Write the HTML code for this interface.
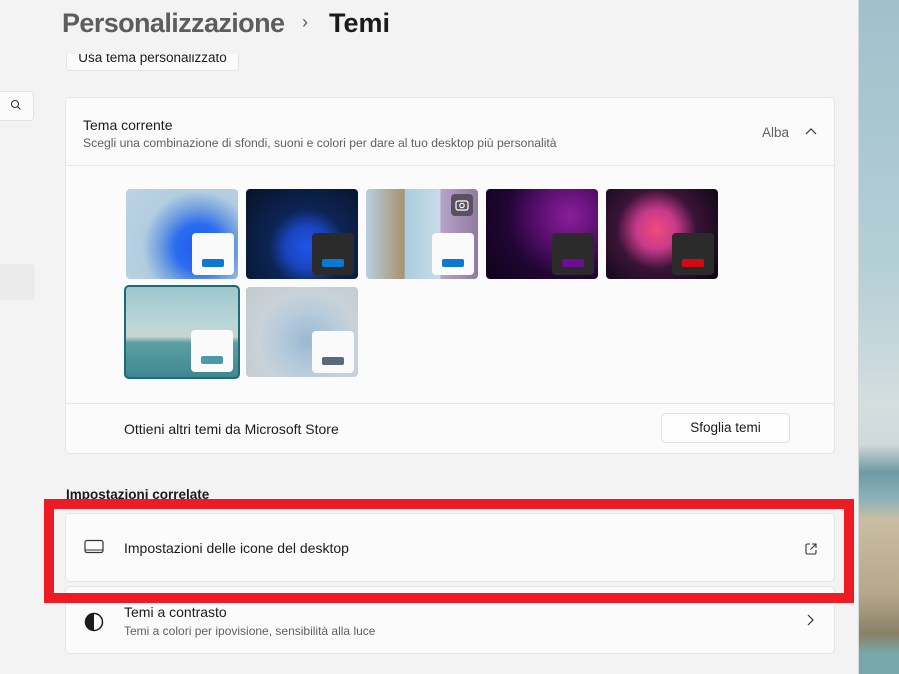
<!DOCTYPE html><html><head><meta charset="utf-8"><style>
*{box-sizing:border-box;margin:0;padding:0}
body{width:899px;height:674px;overflow:hidden;background:#f3f3f3;font-family:"Segoe UI","Liberation Sans",sans-serif;color:#1b1b1b;position:relative}
.abs{position:absolute}
.card{position:absolute;background:#fbfbfb;border:1px solid #e5e5e5;border-radius:5px}
.th{position:absolute;width:112px;height:90px;border-radius:4px;overflow:hidden}
.ov{position:absolute;left:66px;top:44px;width:42px;height:42px;border-radius:4px;background:#fafafa}
.ov.d{background:#2b2b2b}
.bar{position:absolute;left:10px;top:26px;width:22px;height:8px;border-radius:2px}
</style></head><body>
<div class="abs" style="left:859px;top:0;width:40px;height:674px;background:linear-gradient(#9fc0cc 0%,#b5cfd6 40%,#d4dedf 60%,#cfd8da 66%,#6f9aa3 70%,#8bb2b9 74%,#c9bda3 77%,#b7a88a 88%,#8a8068 94%,#78a8aa 97%)"></div>
<div class="abs" style="left:858px;top:0;width:1px;height:674px;background:#d8d8d8"></div>

<div class="abs" style="left:0;top:91px;width:34px;height:30px;background:#fbfbfb;border:1px solid #e3e3e3;border-left:none;border-radius:0 4px 4px 0"></div>
<svg class="abs" style="left:10px;top:99px" width="12" height="12" viewBox="0 0 12 12"><circle cx="5" cy="5" r="3.5" fill="none" stroke="#333" stroke-width="1.1"/><path d="M7.5 7.5L10.5 10.5" stroke="#333" stroke-width="1.1"/></svg>
<div class="abs" style="left:0;top:264px;width:35px;height:36px;background:#eaeaea;border-radius:0 4px 4px 0"></div>

<div class="abs" style="left:66px;top:40px;width:173px;height:31px;background:#fbfbfb;border:1px solid #e3e3e3;border-radius:4px;font-size:13.5px;text-align:center;line-height:34px">Usa tema personalizzato</div>
<div class="abs" style="left:0;top:0;width:858px;height:54px;background:#f3f3f3"></div>
<div class="abs" style="left:62px;top:8px;font-size:27px;font-weight:600;color:#5d5d5d;white-space:nowrap;letter-spacing:-0.6px">Personalizzazione</div>
<div class="abs" style="left:302px;top:12px;font-size:18px;color:#5d5d5d">›</div>
<div class="abs" style="left:329px;top:8px;font-size:27px;font-weight:600;color:#1b1b1b">Temi</div>

<div class="card" style="left:65px;top:97px;width:770px;height:357px">
<div class="abs" style="left:17px;top:19px;font-size:14px">Tema corrente</div>
<div class="abs" style="left:17px;top:38px;font-size:12.2px;color:#5f5f5f;white-space:nowrap">Scegli una combinazione di sfondi, suoni e colori per dare al tuo desktop più personalità</div>
<div class="abs" style="left:696px;top:27px;font-size:13.5px;color:#5f5f5f">Alba</div>
<svg class="abs" style="left:738px;top:29px" width="14" height="10" viewBox="0 0 14 10"><path d="M2 7L7 2L12 7" fill="none" stroke="#333" stroke-width="1.2"/></svg>
<div class="abs" style="left:0;top:67px;width:768px;height:1px;background:#e8e8e8"></div>
<div class="abs" style="left:0;top:305px;width:768px;height:1px;background:#e5e5e5"></div>
<div class="abs" style="left:58px;top:323px;font-size:14px">Ottieni altri temi da Microsoft Store</div>
<div class="abs" style="left:595px;top:315px;width:129px;height:30px;background:#fefefe;border:1px solid #e0e0e0;border-radius:4px;font-size:13.5px;text-align:center;line-height:28px">Sfoglia temi</div>
</div>

<div class="th" style="left:126px;top:189px;background:radial-gradient(circle at 65% 65%,#1d5cf0 0,#2a6cf0 25%,#6a9ae0 40%,#b3cde0 60%,#bcd3e3 100%)"><div class="ov"><div class="bar" style="background:#0a78d4"></div></div></div>
<div class="th" style="left:246px;top:189px;background:radial-gradient(circle at 55% 65%,#1f55e8 0,#1a45c0 25%,#0d2454 45%,#061228 100%)"><div class="ov d"><div class="bar" style="background:#0a78d4"></div></div></div>
<div class="th" style="left:366px;top:189px;background:linear-gradient(90deg,#b7cfe0 0,#a8926e 34%,#a8cde0 35%,#c9dbe6 66%,#b7a3c9 67%,#8f7aa0 100%)"><div class="abs" style="left:85px;top:5px;width:22px;height:22px;border-radius:4px;background:#5a5060"></div><svg class="abs" style="left:89px;top:9px" width="14" height="14" viewBox="0 0 14 14"><rect x="1" y="3" width="12" height="9" rx="2" fill="none" stroke="#fff" stroke-width="1.2"/><circle cx="7" cy="7.5" r="2.2" fill="none" stroke="#fff" stroke-width="1.2"/></svg><div class="ov"><div class="bar" style="background:#0a78d4"></div></div></div>
<div class="th" style="left:486px;top:189px;background:radial-gradient(circle at 75% 30%,#8a1e9a 0,#5a0f70 30%,#210634 60%,#0d0318 100%)"><div class="ov d"><div class="bar" style="background:#6b0f8f"></div></div></div>
<div class="th" style="left:606px;top:189px;background:radial-gradient(circle at 45% 45%,#f04a7a 0,#c83a8a 25%,#3a1438 50%,#0b0610 100%)"><div class="ov d"><div class="bar" style="background:#d40a12"></div></div></div>
<div class="th" style="left:124px;top:285px;width:116px;height:94px;border:2px solid #1d6b78;border-radius:5px;background:linear-gradient(#9ec6cc 0,#b9d6d8 40%,#c8d4d2 55%,#5e9ea3 62%,#3f8890 100%)"><div class="ov" style="left:65px;top:43px"><div class="bar" style="background:#4b9aa9"></div></div></div>
<div class="th" style="left:246px;top:287px;background:radial-gradient(circle at 55% 60%,#9ab8d2 0,#b6cbdb 35%,#c8d2d8 60%,#c2c9cd 100%)"><div class="ov"><div class="bar" style="background:#5a6a78"></div></div></div>

<div class="abs" style="left:66px;top:487px;font-size:13.5px;font-weight:600">Impostazioni correlate</div>

<div class="card" style="left:65px;top:513px;width:770px;height:69px">
<svg class="abs" style="left:18px;top:25px" width="20" height="16" viewBox="0 0 20 16"><rect x="1" y="1.5" width="18" height="12" rx="2" fill="none" stroke="#333" stroke-width="1.2"/><path d="M1.5 11H18.5" stroke="#333" stroke-width="1"/></svg>
<div class="abs" style="left:58px;top:26px;font-size:14px">Impostazioni delle icone del desktop</div>
<svg class="abs" style="left:738px;top:28px" width="14" height="14" viewBox="0 0 14 14"><path d="M6 2H3.5A1.5 1.5 0 0 0 2 3.5v7A1.5 1.5 0 0 0 3.5 12h7A1.5 1.5 0 0 0 12 10.5V8M8 2h4v4M12 2L6.5 7.5" fill="none" stroke="#333" stroke-width="1.1"/></svg>
</div>
<div class="card" style="left:65px;top:586px;width:770px;height:68px">
<svg class="abs" style="left:18px;top:25px" width="20" height="20" viewBox="0 0 20 20"><circle cx="10" cy="10" r="8.5" fill="none" stroke="#1b1b1b" stroke-width="1.5"/><path d="M10 1.5A8.5 8.5 0 0 0 10 18.5Z" fill="#1b1b1b"/></svg>
<div class="abs" style="left:58px;top:17px;font-size:14px">Temi a contrasto</div>
<div class="abs" style="left:58px;top:37px;font-size:12px;color:#5f5f5f">Temi a colori per ipovisione, sensibilità alla luce</div>
<svg class="abs" style="left:738px;top:26px" width="12" height="14" viewBox="0 0 12 14"><path d="M4 2L9 7L4 12" fill="none" stroke="#333" stroke-width="1.2"/></svg>
</div>

<div class="abs" style="left:44px;top:499px;width:810px;height:104px;border:10px solid #ed1c24"></div>
</body></html>
